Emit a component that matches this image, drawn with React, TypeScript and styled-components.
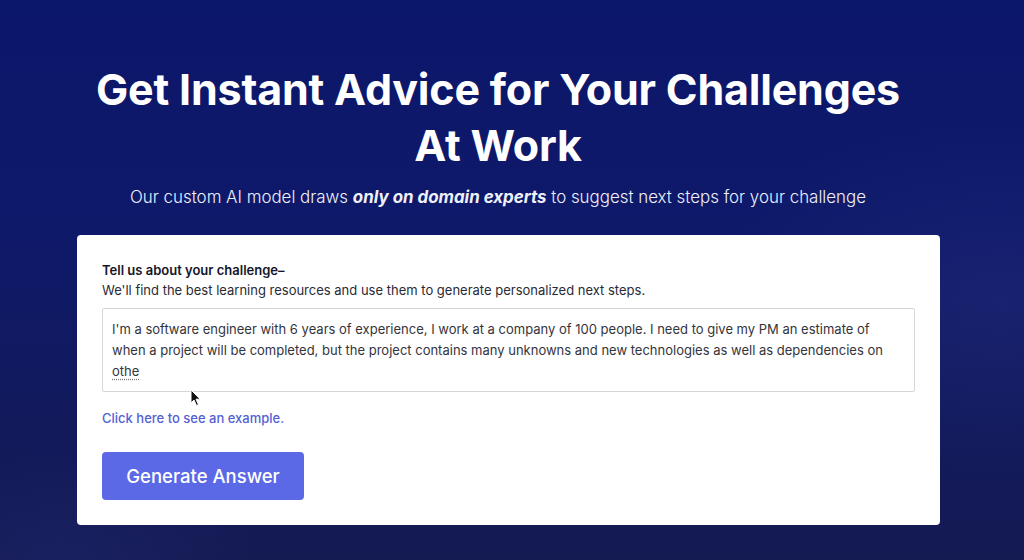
import React from "react";
import styled, { createGlobalStyle } from "styled-components";

const Global = createGlobalStyle`
  html, body { margin: 0; padding: 0; }
  body { font-family: Inter, "Noto Sans", sans-serif; }
  * { box-sizing: border-box; }
`;

const Page = styled.div`
  position: relative;
  width: 1024px;
  height: 560px;
  overflow: hidden;
  background:
    radial-gradient(ellipse 420px 260px at 1000px 300px, rgba(40, 50, 130, 0.35), rgba(0,0,0,0) 70%),
    radial-gradient(ellipse 300px 160px at 60px 560px, rgba(35, 45, 120, 0.35), rgba(0,0,0,0) 70%),
    linear-gradient(180deg, #0b176b 0%, #0f196a 40%, #121a5c 75%, #141a52 100%);
  display: flex;
  flex-direction: column;
  align-items: center;
  padding-top: 61px;
`;

const Title = styled.h1`
  margin: 0 28px 0 0;
  width: 820px;
  text-align: center;
  color: #ffffff;
  font-family: Inter, sans-serif;
  font-weight: 700;
  font-size: 43px;
  line-height: 56px;
  letter-spacing: -0.2px;
`;

const Subtitle = styled.p`
  margin: 13px 28px 0 0;
  color: #eef0fb;
  font-family: Inter, sans-serif;
  font-weight: 300;
  font-size: 16.9px;
  line-height: 22px;
  text-align: center;
  em {
    font-style: italic;
    font-weight: 700;
  }
`;

const Card = styled.section`
  margin: 27px 7px 0 0;
  width: 863px;
  background: #ffffff;
  border-radius: 4px;
  padding: 26px 25px 25px;
  display: flex;
  flex-direction: column;
`;

const Label = styled.div`
  color: #15152a;
  font-weight: 600;
  font-size: 13px;
  line-height: 19px;
`;

const Help = styled.div`
  color: #2a2a35;
  font-weight: 400;
  font-size: 13px;
  line-height: 20px;
`;

const TextBox = styled.div`
  margin-top: 8px;
  height: 84px;
  border: 1px solid #d6d6d9;
  border-radius: 2px;
  padding: 10px 9px;
  color: #34343c;
  font-size: 13px;
  line-height: 21px;
`;

const Misspelled = styled.span`
  text-decoration: underline dotted #777;
  text-underline-offset: 3px;
`;

const ExampleLink = styled.a`
  margin-top: 16px;
  color: #5461d4;
  font-size: 13px;
  font-weight: 500;
  line-height: 20px;
  text-decoration: none;
  cursor: pointer;
`;

const Button = styled.button`
  margin-top: 24px;
  align-self: flex-start;
  width: 202px;
  height: 48px;
  border: none;
  border-radius: 4px;
  background: #5b69e6;
  color: #ffffff;
  font-family: Inter, sans-serif;
  font-size: 18.5px;
  font-weight: 500;
  cursor: pointer;
`;

const Cursor = styled.svg`
  position: absolute;
  left: 190px;
  top: 389px;
`;

export default function App() {
  return (
    <>
      <Global />
      <Page>
        <Title>Get Instant Advice for Your Challenges At Work</Title>
        <Subtitle>
          Our custom AI model draws <em>only on domain experts</em> to suggest next steps for your challenge
        </Subtitle>
        <Card>
          <Label>Tell us about your challenge–</Label>
          <Help>We'll find the best learning resources and use them to generate personalized next steps.</Help>
          <TextBox>
            I'm a software engineer with 6 years of experience, I work at a company of 100 people. I need to give my PM an estimate of when a project will be completed, but the project contains many unknowns and new technologies as well as dependencies on <Misspelled>othe</Misspelled>
          </TextBox>
          <ExampleLink>Click here to see an example.</ExampleLink>
          <Button>Generate Answer</Button>
        </Card>
        <Cursor width="12" height="18" viewBox="0 0 12 18">
          <path d="M1 1 L1 14 L4 11 L6.5 16.5 L8.5 15.6 L6 10.2 L10.3 10.2 Z" fill="#111" stroke="#fff" strokeWidth="1" strokeLinejoin="round" />
        </Cursor>
      </Page>
    </>
  );
}
